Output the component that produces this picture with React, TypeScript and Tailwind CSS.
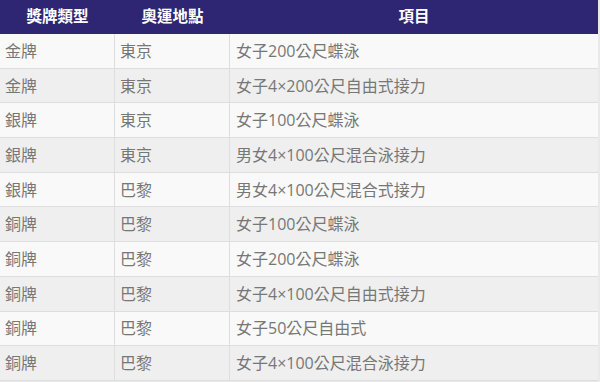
import React from "react";

const rows: [string, string, string][] = [
  ["金牌", "東京", "女子200公尺蝶泳"],
  ["金牌", "東京", "女子4×200公尺自由式接力"],
  ["銀牌", "東京", "女子100公尺蝶泳"],
  ["銀牌", "東京", "男女4×100公尺混合泳接力"],
  ["銀牌", "巴黎", "男女4×100公尺混合式接力"],
  ["銅牌", "巴黎", "女子100公尺蝶泳"],
  ["銅牌", "巴黎", "女子200公尺蝶泳"],
  ["銅牌", "巴黎", "女子4×100公尺自由式接力"],
  ["銅牌", "巴黎", "女子50公尺自由式"],
  ["銅牌", "巴黎", "女子4×100公尺混合泳接力"],
];

export default function App() {
  return (
    <div
      className="w-[600px] h-[382px] overflow-hidden bg-[#e9e9e9] flex"
      style={{ fontFamily: '"Open Sans", "Noto Sans CJK TC", sans-serif' }}
    >
      <div className="w-[598px] flex flex-col">
        <div className="flex h-[34px] bg-[#2e2673] text-white font-bold text-[15.5px] items-center shrink-0">
          <div className="w-[115px] text-center">獎牌類型</div>
          <div className="w-[115px] text-center">奧運地點</div>
          <div className="flex-1 text-center">項目</div>
        </div>
        {rows.map((r, i) => (
          <div
            key={i}
            className={`flex h-[34.7px] shrink-0 border-b border-[#dedede] text-[16px] text-[#777777] ${
              i % 2 === 0 ? "bg-[#f9f9f9]" : "bg-[#efefef]"
            }`}
          >
            <div className="w-[115px] border-r border-[#dedede] flex items-center pl-[5px]">{r[0]}</div>
            <div className="w-[115px] border-r border-[#dedede] flex items-center pl-[5px]">{r[1]}</div>
            <div className="flex-1 flex items-center pl-[6px]">{r[2]}</div>
          </div>
        ))}
      </div>
    </div>
  );
}
